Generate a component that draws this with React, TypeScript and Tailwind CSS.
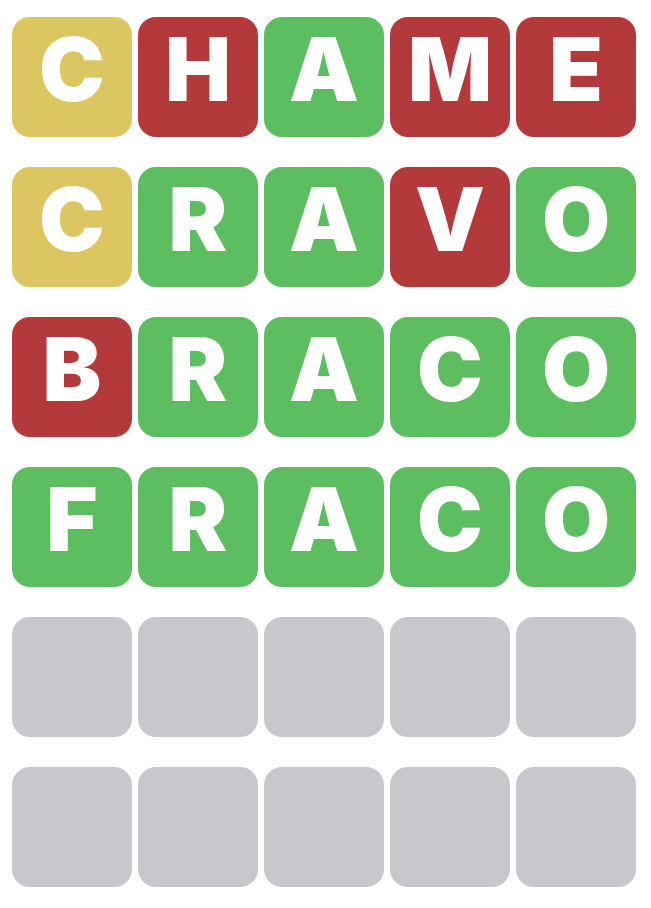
const rows: string[][] = [
  ["C:y", "H:r", "A:g", "M:r", "E:r"],
  ["C:y", "R:g", "A:g", "V:r", "O:g"],
  ["B:r", "R:g", "A:g", "C:g", "O:g"],
  ["F:g", "R:g", "A:g", "C:g", "O:g"],
  ["", "", "", "", ""],
  ["", "", "", "", ""],
];

const colors: Record<string, string> = {
  y: "bg-[#dbc661]",
  r: "bg-[#b4393b]",
  g: "bg-[#5cbe60]",
};

const Tile = ({ cell }: { cell: string }) => {
  const [letter, state] = cell.split(":");
  const bg = state ? colors[state] : "bg-[#c8c7cc]";
  return (
    <div
      className={`flex items-center justify-center w-[120px] h-[120px] rounded-[18px] ${bg}`}
    >
      <span className="pb-[16px] text-white text-[88px] leading-none font-black font-['Inter',sans-serif]">
        {letter}
      </span>
    </div>
  );
};

export default function App() {
  return (
    <div className="w-[651px] h-[908px] bg-white pt-[17px] pl-[12px]">
      <div className="flex flex-col gap-[30px]">
        {rows.map((row, i) => (
          <div key={i} className="flex gap-[6px]">
            {row.map((cell, j) => (
              <Tile key={j} cell={cell} />
            ))}
          </div>
        ))}
      </div>
    </div>
  );
}
